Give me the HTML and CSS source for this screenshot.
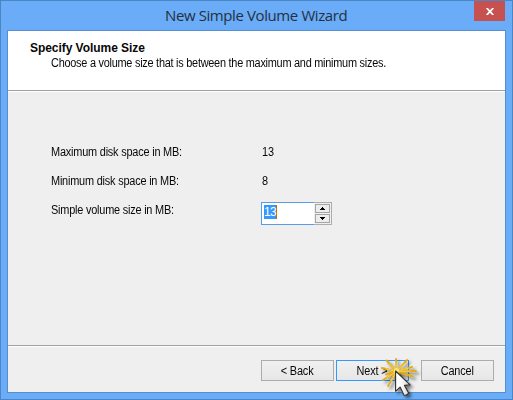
FILE: index.html
```html
<!DOCTYPE html>
<html lang="en">
<head>
<meta charset="utf-8">
<title>New Simple Volume Wizard</title>
<link rel="stylesheet" href="styles.css">
</head>
<body>
<div class="window">
  <header class="titlebar">
    <h1 class="title">New Simple Volume Wizard</h1>
    <button class="close" aria-label="Close"><svg width="8" height="7" viewBox="0 0 8 7"><path d="M.7 0 7.3 7M7.3 0 .7 7" stroke="#fff" stroke-width="1.8"/></svg></button>
  </header>
  <main class="client">
    <section class="heading">
      <h2><span class="h2-text">Specify Volume Size</span></h2>
      <p><span class="desc">Choose a volume size that is between the maximum and minimum sizes.</span></p>
    </section>
    <section class="form">
      <div class="row"><span class="label"><span class="max">Maximum disk space in MB:</span></span><span class="value">13</span></div>
      <div class="row"><span class="label"><span class="min">Minimum disk space in MB:</span></span><span class="value">8</span></div>
      <div class="row"><span class="label"><span class="size">Simple volume size in MB:</span></span>
        <div class="spinner">
          <div class="entry"><span class="selected">13</span></div>
          <div class="arrows">
            <button aria-label="Increase"><svg width="5" height="3" viewBox="0 0 5 3"><path d="M0 3V2h1V1h1V0h1v1h1v1h1v1z"/></svg></button>
            <button aria-label="Decrease"><svg width="5" height="3" viewBox="0 0 5 3"><path d="M0 0v1h1v1h1v1h1V2h1V1h1V0z"/></svg></button>
          </div>
        </div>
      </div>
    </section>
    <footer class="actions">
      <button class="btn back"><span>&lt; Back</span></button>
      <button class="btn next"><span>Next &gt;</span></button>
      <button class="btn cancel"><span>Cancel</span></button>
    </footer>
  </main>
  <svg class="pointer" width="50" height="50" viewBox="0 0 50 50">
    <defs>
      <filter id="shadow" x="-50%" y="-50%" width="200%" height="200%"><feDropShadow dx="2.500" dy="2.500" stdDeviation="1.600" flood-opacity=".5"/></filter>
      <linearGradient id="arrow" x1="0" y1="0" x2="1" y2="0"><stop offset=".3" stop-color="#fff"/><stop offset="1" stop-color="#d4d4d4"/></linearGradient>
    </defs>
    <g filter="url(#shadow)">
      <path fill="none" stroke="#e3ac18" stroke-width="1.900" stroke-linecap="round" d="M22.500 22.500 22 10M22.500 22.500 33 11M22.500 22.500 38 18M22.500 22.500 42 22M22.500 22.500 39 27.500M22.500 22.500 14 37M22.500 22.500 9 31M22.500 22.500 12 25.500M22.500 22.500 8 19M22.500 22.500 12.500 11.500"/>
      <circle cx="22.500" cy="22.500" r="3.800" fill="#ebb928"/>
    </g>
    <path fill="none" stroke="#f8dc5e" stroke-width=".8" stroke-linecap="round" d="M22.500 22.500 22.200 14M22.500 22.500 30 14.500M22.500 22.500 34 19.200M22.500 22.500 36 22.200M22.500 22.500 17 32M22.500 22.500 13 28.500M22.500 22.500 12 20M22.500 22.500 15.500 15"/>
    <circle cx="22.500" cy="21.500" r="2.600" fill="#f9e57d"/>
    <path filter="url(#shadow)" fill="url(#arrow)" stroke="#303030" stroke-width="1.100" stroke-linejoin="round" d="M21.600 22v20.300l4.500-4.200 3.800 7.900q2.500 1 4.700-1.900l-4.100-7.700 5.600-.500z"/>
  </svg>
</div>
</body>
</html>
```
FILE: styles.css
```css
* { box-sizing: border-box; }
body {
  margin: 0;
  font: 12px/14px "Liberation Sans", Arial, sans-serif;
  color: #080808;
}
button { padding: 0; font: inherit; color: inherit; border-radius: 0; }
h1, h2, p { margin: 0; }
.window {
  position: relative;
  width: 513px;
  height: 400px;
  overflow: hidden;
  padding: 0 6px 6px;
  background: #6aacf7;
  border: 1px solid #4b86c4;
}
.titlebar {
  height: 29px;
  display: flex;
  justify-content: flex-end;
}
.title {
  flex: 1;
  padding-left: 158px;
  font: 400 15px/29px "Open Sans", sans-serif;
  color: #25303e;
  white-space: nowrap;
  letter-spacing: -.4px;
}
.close {
  width: 31px;
  height: 20px;
  margin-right: 1px;
  display: flex;
  align-items: center;
  justify-content: center;
  border: 0;
  background: #c75050;
}
.client {
  height: 363px;
  display: flex;
  flex-direction: column;
  border: 1px solid #5490cf;
  background: #efefef;
  white-space: nowrap;
}
.heading {
  height: 60px;
  padding: 10px 0 0 22px;
  background: #fff;
  border-bottom: 1px solid #a0a0a0;
  box-shadow: 0 1px #fff;
}
h2 { font: inherit; font-weight: 700; height: 15px; }
p { padding-left: 21px; line-height: 15px; }
.h2-text { letter-spacing: -.05px; }
.desc, .max, .min, .size, .value, .btn span {
  display: inline-block;
  transform: scaleX(.91);
  transform-origin: 0 50%;
}
.desc { letter-spacing: -.28px; }
.form {
  flex: 1;
  padding: 47px 0 0 43px;
}
.row { height: 29px; display: flex; align-items: flex-start; line-height: 28px; }
.label { width: 211px; letter-spacing: -.22px; }
.size { letter-spacing: -.23px; }
.spinner {
  display: flex;
  width: 71px;
  height: 23px;
  margin: 6px 0 0 -1px;
}
.entry {
  width: 53px;
  padding: 2px;
  background: #fff;
  border: 1px solid #569de5;
  border-right: 0;
}
.selected {
  display: block;
  width: 13px;
  height: 14px;
  line-height: 14px;
  background: #3399ff;
  color: #fff;
  border-right: 1px solid #cc6600;
  letter-spacing: -.6px;
}
.arrows {
  width: 18px;
  display: grid;
  grid-template-rows: 1fr 1fr;
  gap: 1px;
  padding: 1px;
  border: 1px solid #abadb3;
  border-left: 0;
  background: #efefef;
}
.arrows button {
  display: flex;
  align-items: center;
  justify-content: center;
  border: 1px solid #a5a5a5;
  background: #ededed;
}
.actions {
  height: 47px;
  display: flex;
  justify-content: flex-end;
  padding: 14px 11px 0 0;
  border-top: 1px solid #a0a0a0;
  box-shadow: inset 0 1px #fff;
}
.btn {
  width: 73px;
  height: 21px;
  border: 1px solid #acacac;
  background: linear-gradient(#f0f0f0, #e7e7e7);
  letter-spacing: -.15px;
}
.btn span { transform-origin: 50% 50%; margin-right: 1px; }
.next { margin: 0 12px 0 2px; border-color: #3399ff; }
.btn.next span { margin-right: 0; }
.pointer {
  position: absolute;
  left: 373px;
  top: 348px;
}
```
